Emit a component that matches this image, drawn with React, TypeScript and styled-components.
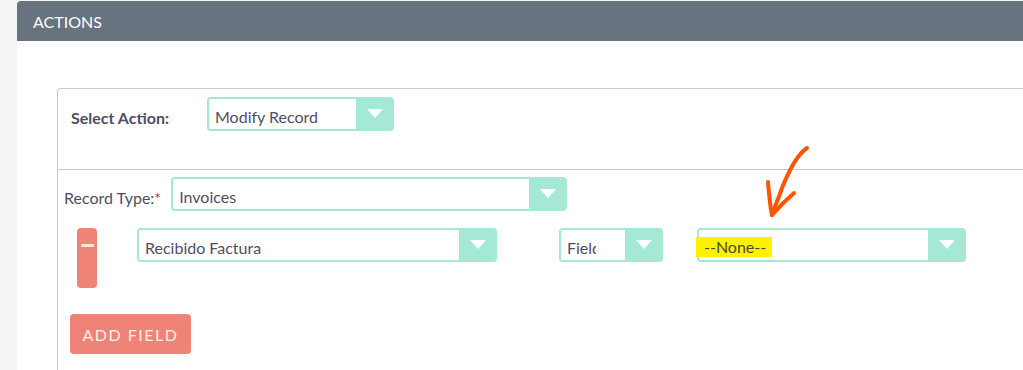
import React from 'react';
import styled, { createGlobalStyle } from 'styled-components';

const GlobalStyle = createGlobalStyle`
  html, body {
    margin: 0;
    padding: 0;
    background: #f5f5f5;
    font-family: Lato, 'Open Sans', sans-serif;
    color: #534d64;
  }
  #root {
    height: 370px;
    overflow: hidden;
  }
`;

const Page = styled.div`
  margin-left: 17px;
  padding-top: 1px;
  height: 369px;
  display: flex;
  flex-direction: column;
`;

const PanelHeader = styled.div`
  height: 40px;
  background: #67737e;
  border-top-left-radius: 4px;
  color: #fff;
  font-size: 16px;
  display: flex;
  align-items: center;
  padding-left: 16px;
`;

const PanelBody = styled.div`
  flex: 1;
  background: #fff;
  padding: 47px 0 0 40px;
  overflow: hidden;
`;

const ActionBox = styled.div`
  border: 1px solid #c3ccd4;
  border-right: none;
  border-bottom: none;
  border-top-left-radius: 4px;
  height: 400px;
`;

const TopSection = styled.div`
  height: 81px;
  border-bottom: 1px solid #c3ccd4;
  display: flex;
  align-items: flex-start;
  padding: 8px 0 0 13px;
  box-sizing: border-box;
`;

const BoldLabel = styled.span`
  font-weight: 700;
  font-size: 16px;
  width: 136px;
  height: 34px;
  box-sizing: border-box;
  line-height: 34px;
  padding-top: 4px;
`;

const Label = styled.span`
  font-size: 16px;
  height: 34px;
  box-sizing: border-box;
  line-height: 34px;
  padding-top: 4px;
  margin-right: 10px;
`;

const Req = styled.span`
  color: #e0262b;
`;

const FieldsSection = styled.div`
  padding: 7px 0 0 6px;
  display: flex;
  flex-direction: column;
`;

const Row = styled.div<{ $mt?: number }>`
  display: flex;
  align-items: flex-start;
  margin-top: ${(p) => p.$mt ?? 0}px;
`;

const SelectBox = styled.div<{ $w: number; $ml?: number }>`
  width: ${(p) => p.$w}px;
  margin-left: ${(p) => p.$ml ?? 0}px;
  height: 34px;
  box-sizing: border-box;
  border: 2px solid #a5e8d6;
  border-radius: 4px;
  display: flex;
  flex-shrink: 0;
`;

const SelectText = styled.div`
  flex: 1;
  min-width: 0;
  background: #fff;
  border-radius: 2px 0 0 2px;
  font-size: 16px;
  display: flex;
  align-items: center;
  padding: 4px 0 0 6px;
  white-space: nowrap;
`;

const ClipText = styled.span<{ $max?: number }>`
  overflow: hidden;
  max-width: ${(p) => (p.$max ? `${p.$max}px` : 'none')};
`;

const SelectArrow = styled.div`
  width: 36px;
  background: #a5e8d6;
  display: flex;
  align-items: center;
  justify-content: center;
  &::after {
    content: '';
    border-left: 8px solid transparent;
    border-right: 8px solid transparent;
    border-top: 9px solid #fff;
    margin-left: 1px;
    margin-top: -1px;
  }
`;

const Highlight = styled.span`
  background: #fff200;
  color: #4b4a2a;
  margin-left: -9px;
  padding: 0 6px 1px 8px;
`;

const RemoveButton = styled.button`
  width: 20px;
  height: 60px;
  border: none;
  border-radius: 4px;
  background: #f08377;
  padding: 0;
  margin-left: 13px;
  margin-right: 40px;
  display: flex;
  justify-content: center;
  align-items: flex-start;
  flex-shrink: 0;
  &::before {
    content: '';
    display: block;
    width: 13px;
    height: 3px;
    margin-top: 16px;
    background: #fbe9d8;
    border-radius: 1px;
  }
`;

const AddButton = styled.button`
  margin: 26px 0 0 6px;
  width: 121px;
  height: 40px;
  border: none;
  border-radius: 4px;
  background: #f08377;
  color: #fdf0ea;
  font-family: Lato, sans-serif;
  font-size: 16px;
  letter-spacing: 1.5px;
  text-transform: uppercase;
  align-self: flex-start;
  padding: 0;
`;

const Annotation = styled.svg`
  position: absolute;
  left: 760px;
  top: 140px;
  pointer-events: none;
`;

const Select: React.FC<{ w: number; ml?: number; clip?: number; children: React.ReactNode }> = ({
  w,
  ml,
  clip,
  children,
}) => (
  <SelectBox $w={w} $ml={ml}>
    <SelectText>
      <ClipText $max={clip}>{children}</ClipText>
    </SelectText>
    <SelectArrow />
  </SelectBox>
);

export default function App() {
  return (
    <>
      <GlobalStyle />
      <Page>
        <PanelHeader>ACTIONS</PanelHeader>
        <PanelBody>
          <ActionBox>
            <TopSection>
              <BoldLabel>Select Action:</BoldLabel>
              <Select w={187}>Modify Record</Select>
            </TopSection>
            <FieldsSection>
              <Row>
                <Label>
                  Record Type:<Req>*</Req>
                </Label>
                <Select w={396}>Invoices</Select>
              </Row>
              <Row $mt={17}>
                <RemoveButton aria-label="remove" />
                <Select w={360}>Recibido Factura</Select>
                <Select w={104} ml={62} clip={29}>
                  Field
                </Select>
                <SelectBox $w={269} $ml={34}>
                  <SelectText>
                    <Highlight>--None--</Highlight>
                  </SelectText>
                  <SelectArrow />
                </SelectBox>
              </Row>
              <AddButton>Add Field</AddButton>
            </FieldsSection>
          </ActionBox>
        </PanelBody>
      </Page>
      <Annotation width="60" height="90" viewBox="0 0 60 90">
        <g fill="none" stroke="#ff5500" strokeWidth="4" strokeLinecap="round" strokeLinejoin="round">
          <path d="M47 8 C38 14 30 28 22 48 C18 60 14 68 12 75" />
          <path d="M8 42 C9 54 10 66 12 75 C18 68 26 60 34 53" />
        </g>
      </Annotation>
    </>
  );
}
